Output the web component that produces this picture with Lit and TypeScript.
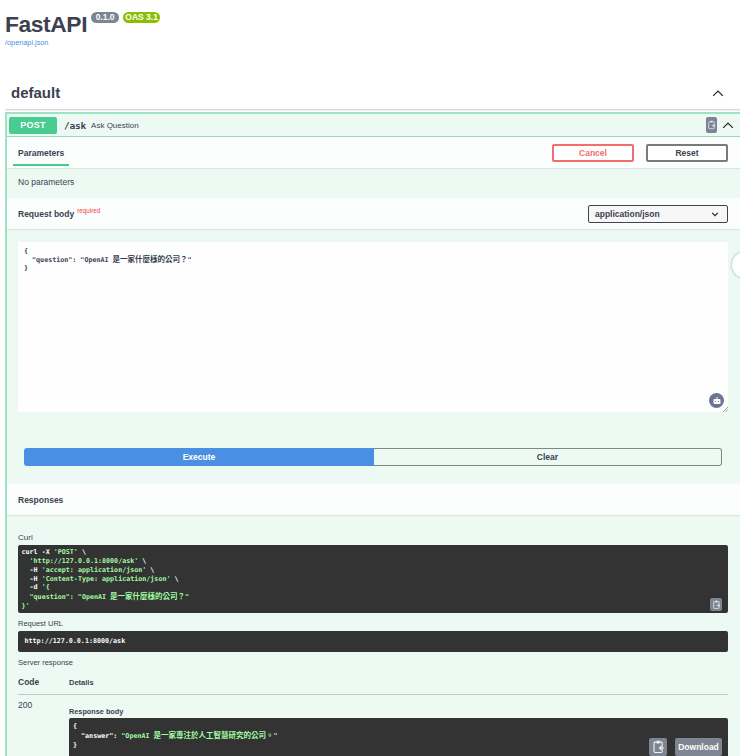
import { LitElement, html, css, svg } from "lit";
import { customElement } from "lit/decorators.js";

const clip = svg`<path d="M7 3.5h-1.500a1 1 0 0 0-1 1v9.500a1 1 0 0 0 1 1h7a1 1 0 0 0 1-1v-9.500a1 1 0 0 0-1-1h-1.500" fill="none" stroke="currentColor" stroke-width="1.200"/><rect x="7" y="2" width="4" height="3" rx=".8" fill="currentColor"/><path d="M15.500 10h-5m2-2-2 2 2 2" fill="none" stroke="currentColor" stroke-width="1.200"/>`;
const copyIcon = html`<svg viewBox="0 0 18 18" class="glyph">${clip}</svg>`;
const chevron = html`<svg viewBox="0 0 20 20" class="chev"><path d="M4 13.500 10 7.500l6 6" fill="none" stroke="currentColor" stroke-width="1.500"/></svg>`;

@customElement("app-root")
export class AppRoot extends LitElement {
  static styles = css`
    :host {
      display: block;
      width: 740px;
      height: 756px;
      overflow: hidden;
      position: relative;
      background: #fff;
      font-family: "Liberation Sans", Arial, sans-serif;
      color: #3b4151;
    }
    .info { padding: 10px 0 0 5px; height: 61px; box-sizing: border-box; }
    .title-row { display: flex; align-items: flex-start; height: 28px; }
    h1 { margin: 0; font-size: 22.800px; line-height: 28px; font-weight: 700; letter-spacing: -.4px; }
    .badge {
      border-radius: 6px; color: #fff; font-size: 8.500px; font-weight: 700; line-height: 11px;
      height: 11px; margin-top: 2px; text-align: center; white-space: nowrap;
    }
    .v { background: #7d8492; margin-left: 4px; width: 28px; }
    .oas { background: #89bf04; margin-left: 4px; width: 37px; }
    .link { display: block; margin-top: 0; color: #4990e2; font-size: 7.300px; line-height: 9px; }
    .tag {
      margin: 10px 0 0 5px; height: 39px; display: flex; align-items: center; justify-content: space-between;
      padding: 5px 14px 0 6px; border-bottom: 1px solid #d8dade; box-shadow: 0 1px 0 #eee; box-sizing: border-box;
      font-size: 15px; font-weight: 700; width: 735px;
    }
    .chev { width: 16px; height: 16px; color: #222; display: block; }
    .block {
      margin: 2px 0 0 5px; width: 760px; height: 660px; box-sizing: border-box;
      border: 2px solid #9fe2c6; border-right: 0; border-bottom: 0; background: #edfaf4;
    }
    .summary {
      height: 22px; border-bottom: 1px solid #90dcbc; display: flex; align-items: center; padding-left: 2px;
      box-sizing: content-box; width: 733px; position: relative;
    }
    .post {
      width: 48px; height: 17px; background: #49cc90; color: #fff; border-radius: 2px; font-size: 9px;
      font-weight: 700; text-align: center; line-height: 17px; letter-spacing: .2px;
    }
    .path { margin-left: 7px; font: 700 9.500px "DejaVu Sans Mono", monospace; color: #3b4151; letter-spacing: -.2px; }
    .desc { margin-left: 5px; font-size: 8px; color: #3b4151; }
    .sum-right { margin-left: auto; display: flex; align-items: center; gap: 3px; padding-right: 6px; }
    .sum-copy {
      width: 11px; height: 16px; background: #7d8492; color: #eef; border-radius: 2px; display: flex; align-items: center; justify-content: center;
    }
    .sum-copy .glyph { width: 12px; height: 12px; }
    .content { width: 733px; }
    .bar {
      background: #fbfefc; box-shadow: 0 1px 1px rgba(0,0,0,.08); display: flex; align-items: center;
      padding: 0 12px 0 11px; box-sizing: border-box; position: relative;
    }
    .bar-h { height: 31px; }
    .tab {
      font-size: 8.500px; font-weight: 700; position: relative; height: 100%; display: flex; align-items: center;
    }
    .tab::after {
      content: ""; position: absolute; left: -5px; width: 56px; bottom: 2px; height: 2px; background: #49cc90;
    }
    .actions { margin-left: auto; display: flex; gap: 12px; }
    .btn {
      width: 82px; height: 18px; box-sizing: border-box; border: 2px solid #7a7a7a; border-radius: 2px; background: #fff;
      font-size: 8.500px; font-weight: 700; text-align: center; line-height: 14px; color: #3b4151;
    }
    .cancel { border-color: #f26d6d; color: #f26d6d; }
    .noparam { height: 30px; padding: 0 0 2px 11px; box-sizing: border-box; display: flex; align-items: center; font-size: 8.500px; }
    .rb { font-size: 8.500px; font-weight: 700; }
    .req { font-size: 6.300px; color: #f93e3e; font-weight: 400; margin-left: 3px; position: relative; top: -3px; }
    .select {
      margin-left: auto; width: 140px; height: 18px; box-sizing: border-box; border: 1.500px solid #41444e; border-radius: 2px;
      background: #f7f7f7; display: flex; align-items: center; padding: 0 8px 0 6px; font-size: 8.500px; font-weight: 700; justify-content: space-between;
    }
    .select svg { width: 8px; height: 8px; }
    .editor-wrap { padding: 13px 12px 0 11px; height: 183px; box-sizing: border-box; position: relative; }
    .editor {
      height: 170px; background: #fdfefd; position: relative; box-sizing: border-box; padding: 5px 0 0 6px;
      font: 700 6.700px/8.600px "DejaVu Sans Mono", "Noto Sans CJK TC", monospace; color: #3b4151; white-space: pre;
    }
    .cjk { font-size: 7.500px; font-family: "Noto Sans CJK TC", sans-serif; }
    .editor .cjk, .resp-pre .cjk { line-height: 0; }
    .robot {
      position: absolute; right: 4px; bottom: 4px; width: 15px; height: 15px; border-radius: 50%; background: #6c7596; color: #fff;
      display: flex; align-items: center; justify-content: center;
    }
    .robot svg { width: 10px; height: 10px; }
    .grip { position: absolute; right: 0; bottom: 0; width: 5px; height: 5px; }
    .exec-row { margin: 36px 18px 0 17px; display: flex; height: 18px; }
    .exec {
      flex: 0 0 350px; background: #4990e2; color: #fff; font-size: 8.500px; font-weight: 700; text-align: center; line-height: 18px;
      border-radius: 3px 0 0 3px;
    }
    .clear {
      flex: 1; box-sizing: border-box; border: 1.500px solid #7d8a84; border-left: 0; border-radius: 0 3px 3px 0; font-size: 8.500px; font-weight: 700;
      text-align: center; line-height: 16px;
    }
    .resp-head { margin-top: 18px; height: 31px; font-size: 8.500px; font-weight: 700; }
    .resp { padding: 0 12px 0 11px; }
    .lbl { font-size: 7.500px; line-height: 9px; color: #3b4151; }
    .curl-l { margin-top: 18px; font-size: 8px; }
    pre {
      margin: 0; background: #333; color: #fff; border-radius: 2px; position: relative; box-sizing: border-box;
      font: 700 6.700px/8.850px "DejaVu Sans Mono", "Noto Sans CJK TC", monospace;
    }
    .curl { height: 68px; margin-top: 3px; padding: 3px 0 0 3.500px; }
    .s { color: #a2fca2; }
    .url { height: 21px; margin-top: 3px; padding-left: 6.500px; line-height: 21px; }
    .mt6 { margin-top: 6px; }
    .copy {
      position: absolute; background: #7d8492; color: #f2f2f2; border-radius: 2px; display: flex; align-items: center; justify-content: center;
    }
    .copy .glyph { width: 90%; height: 90%; }
    .c1 { right: 6px; bottom: 2px; width: 12px; height: 13px; }
    .head-row { display: flex; align-items: center; height: 22px; padding-bottom: 3px; box-sizing: border-box; border-bottom: 1px solid #b9cdc4; margin-top: 6px; }
    .code-h { width: 51px; font-size: 8.500px; font-weight: 700; }
    .det-h { font-size: 7.500px; font-weight: 700; }
    .row { display: flex; }
    .code { width: 51px; font-size: 8.500px; padding-top: 5px; }
    .body { flex: 1; padding-top: 12px; }
    .body .lbl { font-weight: 700; font-size: 7.300px; }
    .resp-pre { margin-top: 2px; height: 60px; padding: 4px 0 0 4px; line-height: 9.500px; }
    .c2 { right: 61px; top: 20px; width: 18px; height: 18px; }
    .dl {
      position: absolute; right: 6px; top: 20px; width: 47px; height: 18px; background: #7d8492; color: #fff; border-radius: 2px;
      font: 700 8.500px/18px "Liberation Sans", sans-serif; text-align: center;
    }
    .knob {
      position: absolute; left: 732px; top: 252px; width: 26px; height: 26px; border-radius: 50%; background: #fff; box-shadow: 0 0 3px rgba(0,0,0,.35);
    }
  `;

  render() {
    return html`
      <div class="info">
        <div class="title-row">
          <h1>FastAPI</h1>
          <span class="badge v">0.1.0</span>
          <span class="badge oas">OAS 3.1</span>
        </div>
        <a class="link">/openapi.json</a>
      </div>
      <div class="tag"><span>default</span>${chevron}</div>
      <div class="block">
        <div class="summary">
          <div class="post">POST</div>
          <div class="path">/ask</div>
          <div class="desc">Ask Question</div>
          <div class="sum-right"><div class="sum-copy">${copyIcon}</div>${chevron}</div>
        </div>
        <div class="content">
          <div class="bar bar-h">
            <div class="tab">Parameters</div>
            <div class="actions"><div class="btn cancel">Cancel</div><div class="btn">Reset</div></div>
          </div>
          <div class="noparam">No parameters</div>
          <div class="bar bar-h">
            <span class="rb">Request body</span><span class="req">required</span>
            <div class="select">application/json
              <svg viewBox="0 0 10 10"><path d="M1.500 3.500 5 7l3.500-3.500" fill="none" stroke="#222" stroke-width="1.500"/></svg>
            </div>
          </div>
          <div class="editor-wrap">
            <div class="editor">{
  "question": "OpenAI <span class="cjk">是一家什麼樣的公司？</span>"
}<div class="robot"><svg viewBox="0 0 10 10"><rect x="1.500" y="3" width="7" height="5" rx="1" fill="currentColor"/><rect x="4.500" y="1" width="1" height="2" fill="currentColor"/><rect x="3" y="5" width="1" height="1" fill="#6c7596"/><rect x="6" y="5" width="1" height="1" fill="#6c7596"/></svg></div><svg class="grip" viewBox="0 0 5 5"><path d="M0 5 5 0M2.500 5 5 2.500" stroke="#777" stroke-width=".7"/></svg></div>
          </div>
          <div class="exec-row"><div class="exec">Execute</div><div class="clear">Clear</div></div>
          <div class="bar resp-head">Responses</div>
          <div class="resp">
            <div class="lbl curl-l">Curl</div>
            <pre class="curl">curl -X <span class="s">'POST'</span> \\
  <span class="s">'http://127.0.0.1:8000/ask'</span> \\
  -H <span class="s">'accept: application/json'</span> \\
  -H <span class="s">'Content-Type: application/json'</span> \\
  -d <span class="s">'{
  "question": "OpenAI <span class="cjk">是一家什麼樣的公司？</span>"
}'</span><div class="copy c1">${copyIcon}</div></pre>
            <div class="lbl mt6">Request URL</div>
            <pre class="url">http://127.0.0.1:8000/ask</pre>
            <div class="lbl mt6">Server response</div>
            <div class="head-row"><div class="code-h">Code</div><div class="det-h">Details</div></div>
            <div class="row">
              <div class="code">200</div>
              <div class="body">
                <div class="lbl">Response body</div>
                <pre class="resp-pre">{
  "answer": <span class="s">"OpenAI <span class="cjk">是一家專注於人工智慧研究的公司。</span>"</span>
}<div class="copy c2">${copyIcon}</div><div class="dl">Download</div></pre>
              </div>
            </div>
          </div>
        </div>
      </div>
      <div class="knob"></div>
    `;
  }
}
